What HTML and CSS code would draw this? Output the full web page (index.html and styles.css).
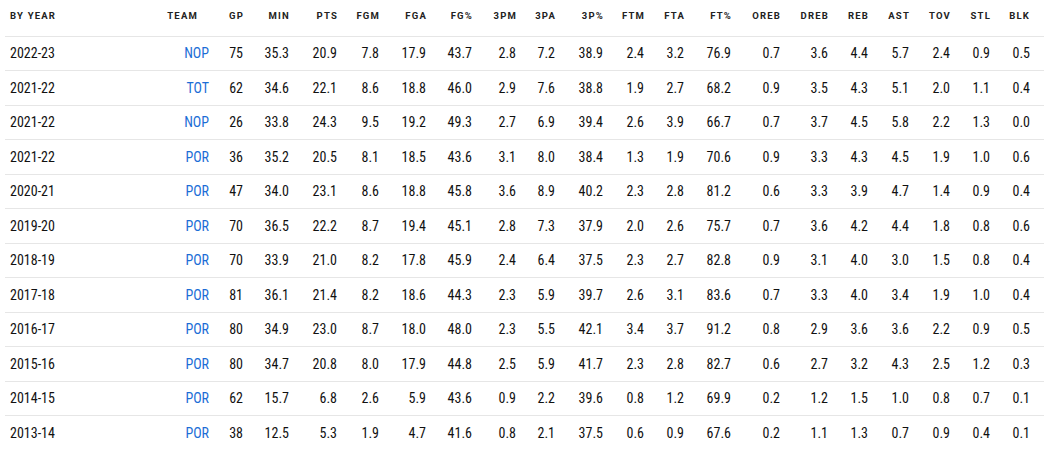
FILE: index.html
```html
<!DOCTYPE html>
<html lang="en">
<head>
<meta charset="utf-8">
<title>Stats by year</title>
<link rel="stylesheet" href="styles.css">
</head>
<body>
<table class="stats">
  <colgroup>
    <col class="w-year"><col class="w-team"><col class="w34"><col class="w46"><col class="w48"><col class="w42"><col class="w47"><col class="w46"><col class="w44"><col class="w39"><col class="w48"><col class="w41"><col class="w40"><col class="w47"><col class="w49"><col class="w48"><col class="w40"><col class="w41"><col class="w41"><col class="w40"><col class="w44">
  </colgroup>
  <thead>
    <tr>
      <th class="year">BY YEAR</th><th class="team">TEAM</th><th>GP</th><th>MIN</th><th>PTS</th><th>FGM</th><th>FGA</th><th>FG%</th><th>3PM</th><th>3PA</th><th>3P%</th><th>FTM</th><th>FTA</th><th>FT%</th><th>OREB</th><th>DREB</th><th>REB</th><th>AST</th><th>TOV</th><th>STL</th><th class="last">BLK</th>
    </tr>
  </thead>
  <tbody>
    <tr><td class="year">2022-23</td><td class="team"><a href="#">NOP</a></td><td>75</td><td>35.3</td><td>20.9</td><td>7.8</td><td>17.9</td><td>43.7</td><td>2.8</td><td>7.2</td><td>38.9</td><td>2.4</td><td>3.2</td><td>76.9</td><td>0.7</td><td>3.6</td><td>4.4</td><td>5.7</td><td>2.4</td><td>0.9</td><td class="last">0.5</td></tr>
    <tr><td class="year">2021-22</td><td class="team"><a href="#">TOT</a></td><td>62</td><td>34.6</td><td>22.1</td><td>8.6</td><td>18.8</td><td>46.0</td><td>2.9</td><td>7.6</td><td>38.8</td><td>1.9</td><td>2.7</td><td>68.2</td><td>0.9</td><td>3.5</td><td>4.3</td><td>5.1</td><td>2.0</td><td>1.1</td><td class="last">0.4</td></tr>
    <tr><td class="year">2021-22</td><td class="team"><a href="#">NOP</a></td><td>26</td><td>33.8</td><td>24.3</td><td>9.5</td><td>19.2</td><td>49.3</td><td>2.7</td><td>6.9</td><td>39.4</td><td>2.6</td><td>3.9</td><td>66.7</td><td>0.7</td><td>3.7</td><td>4.5</td><td>5.8</td><td>2.2</td><td>1.3</td><td class="last">0.0</td></tr>
    <tr><td class="year">2021-22</td><td class="team"><a href="#">POR</a></td><td>36</td><td>35.2</td><td>20.5</td><td>8.1</td><td>18.5</td><td>43.6</td><td>3.1</td><td>8.0</td><td>38.4</td><td>1.3</td><td>1.9</td><td>70.6</td><td>0.9</td><td>3.3</td><td>4.3</td><td>4.5</td><td>1.9</td><td>1.0</td><td class="last">0.6</td></tr>
    <tr><td class="year">2020-21</td><td class="team"><a href="#">POR</a></td><td>47</td><td>34.0</td><td>23.1</td><td>8.6</td><td>18.8</td><td>45.8</td><td>3.6</td><td>8.9</td><td>40.2</td><td>2.3</td><td>2.8</td><td>81.2</td><td>0.6</td><td>3.3</td><td>3.9</td><td>4.7</td><td>1.4</td><td>0.9</td><td class="last">0.4</td></tr>
    <tr><td class="year">2019-20</td><td class="team"><a href="#">POR</a></td><td>70</td><td>36.5</td><td>22.2</td><td>8.7</td><td>19.4</td><td>45.1</td><td>2.8</td><td>7.3</td><td>37.9</td><td>2.0</td><td>2.6</td><td>75.7</td><td>0.7</td><td>3.6</td><td>4.2</td><td>4.4</td><td>1.8</td><td>0.8</td><td class="last">0.6</td></tr>
    <tr><td class="year">2018-19</td><td class="team"><a href="#">POR</a></td><td>70</td><td>33.9</td><td>21.0</td><td>8.2</td><td>17.8</td><td>45.9</td><td>2.4</td><td>6.4</td><td>37.5</td><td>2.3</td><td>2.7</td><td>82.8</td><td>0.9</td><td>3.1</td><td>4.0</td><td>3.0</td><td>1.5</td><td>0.8</td><td class="last">0.4</td></tr>
    <tr><td class="year">2017-18</td><td class="team"><a href="#">POR</a></td><td>81</td><td>36.1</td><td>21.4</td><td>8.2</td><td>18.6</td><td>44.3</td><td>2.3</td><td>5.9</td><td>39.7</td><td>2.6</td><td>3.1</td><td>83.6</td><td>0.7</td><td>3.3</td><td>4.0</td><td>3.4</td><td>1.9</td><td>1.0</td><td class="last">0.4</td></tr>
    <tr><td class="year">2016-17</td><td class="team"><a href="#">POR</a></td><td>80</td><td>34.9</td><td>23.0</td><td>8.7</td><td>18.0</td><td>48.0</td><td>2.3</td><td>5.5</td><td>42.1</td><td>3.4</td><td>3.7</td><td>91.2</td><td>0.8</td><td>2.9</td><td>3.6</td><td>3.6</td><td>2.2</td><td>0.9</td><td class="last">0.5</td></tr>
    <tr><td class="year">2015-16</td><td class="team"><a href="#">POR</a></td><td>80</td><td>34.7</td><td>20.8</td><td>8.0</td><td>17.9</td><td>44.8</td><td>2.5</td><td>5.9</td><td>41.7</td><td>2.3</td><td>2.8</td><td>82.7</td><td>0.6</td><td>2.7</td><td>3.2</td><td>4.3</td><td>2.5</td><td>1.2</td><td class="last">0.3</td></tr>
    <tr><td class="year">2014-15</td><td class="team"><a href="#">POR</a></td><td>62</td><td>15.7</td><td>6.8</td><td>2.6</td><td>5.9</td><td>43.6</td><td>0.9</td><td>2.2</td><td>39.6</td><td>0.8</td><td>1.2</td><td>69.9</td><td>0.2</td><td>1.2</td><td>1.5</td><td>1.0</td><td>0.8</td><td>0.7</td><td class="last">0.1</td></tr>
    <tr><td class="year">2013-14</td><td class="team"><a href="#">POR</a></td><td>38</td><td>12.5</td><td>5.3</td><td>1.9</td><td>4.7</td><td>41.6</td><td>0.8</td><td>2.1</td><td>37.5</td><td>0.6</td><td>0.9</td><td>67.6</td><td>0.2</td><td>1.1</td><td>1.3</td><td>0.7</td><td>0.9</td><td>0.4</td><td class="last">0.1</td></tr>
  </tbody>
</table>
</body>
</html>
```
FILE: styles.css
```css
html, body {
  margin: 0;
  padding: 0;
  background: #ffffff;
}

body {
  font-family: Roboto, "Liberation Sans", sans-serif;
  font-stretch: 83%;
  color: #111111;
  overflow: hidden;
}

.stats {
  margin-left: 5px;
  width: 1039px;
  table-layout: fixed;
  border-collapse: collapse;
  border-spacing: 0;
}

.w-year { width: 145px; }
.w-team { width: 69px; }
.w34 { width: 34px; }
.w39 { width: 39px; }
.w40 { width: 40px; }
.w41 { width: 41px; }
.w42 { width: 42px; }
.w44 { width: 44px; }
.w46 { width: 46px; }
.w47 { width: 47px; }
.w48 { width: 48px; }
.w49 { width: 49px; }

.stats th {
  font-weight: 700;
  font-stretch: 100%;
  font-size: 9.5px;
  letter-spacing: 1.2px;
  color: #222222;
  text-align: right;
  white-space: nowrap;
  height: 36px;
  padding: 0 9px 5px 0;
  box-sizing: border-box;
  vertical-align: middle;
  border-bottom: 1px solid #e6e6e6;
}

.stats th.year {
  text-align: left;
  padding-left: 5px;
}

.stats th.team {
  padding-right: 21px;
}

.stats td {
  font-size: 14px;
  text-align: right;
  white-space: nowrap;
  height: 34.5px;
  padding: 0 10px 0 0;
  box-sizing: border-box;
  vertical-align: middle;
  border-bottom: 1px solid #e6e6e6;
}

.stats tbody tr:last-child td {
  border-bottom: none;
}

.stats td.year {
  text-align: left;
  padding-left: 5px;
}

.stats .last {
  padding-right: 14px;
}

.stats td.team a {
  color: #1b6dd6;
  text-decoration: none;
}
```
